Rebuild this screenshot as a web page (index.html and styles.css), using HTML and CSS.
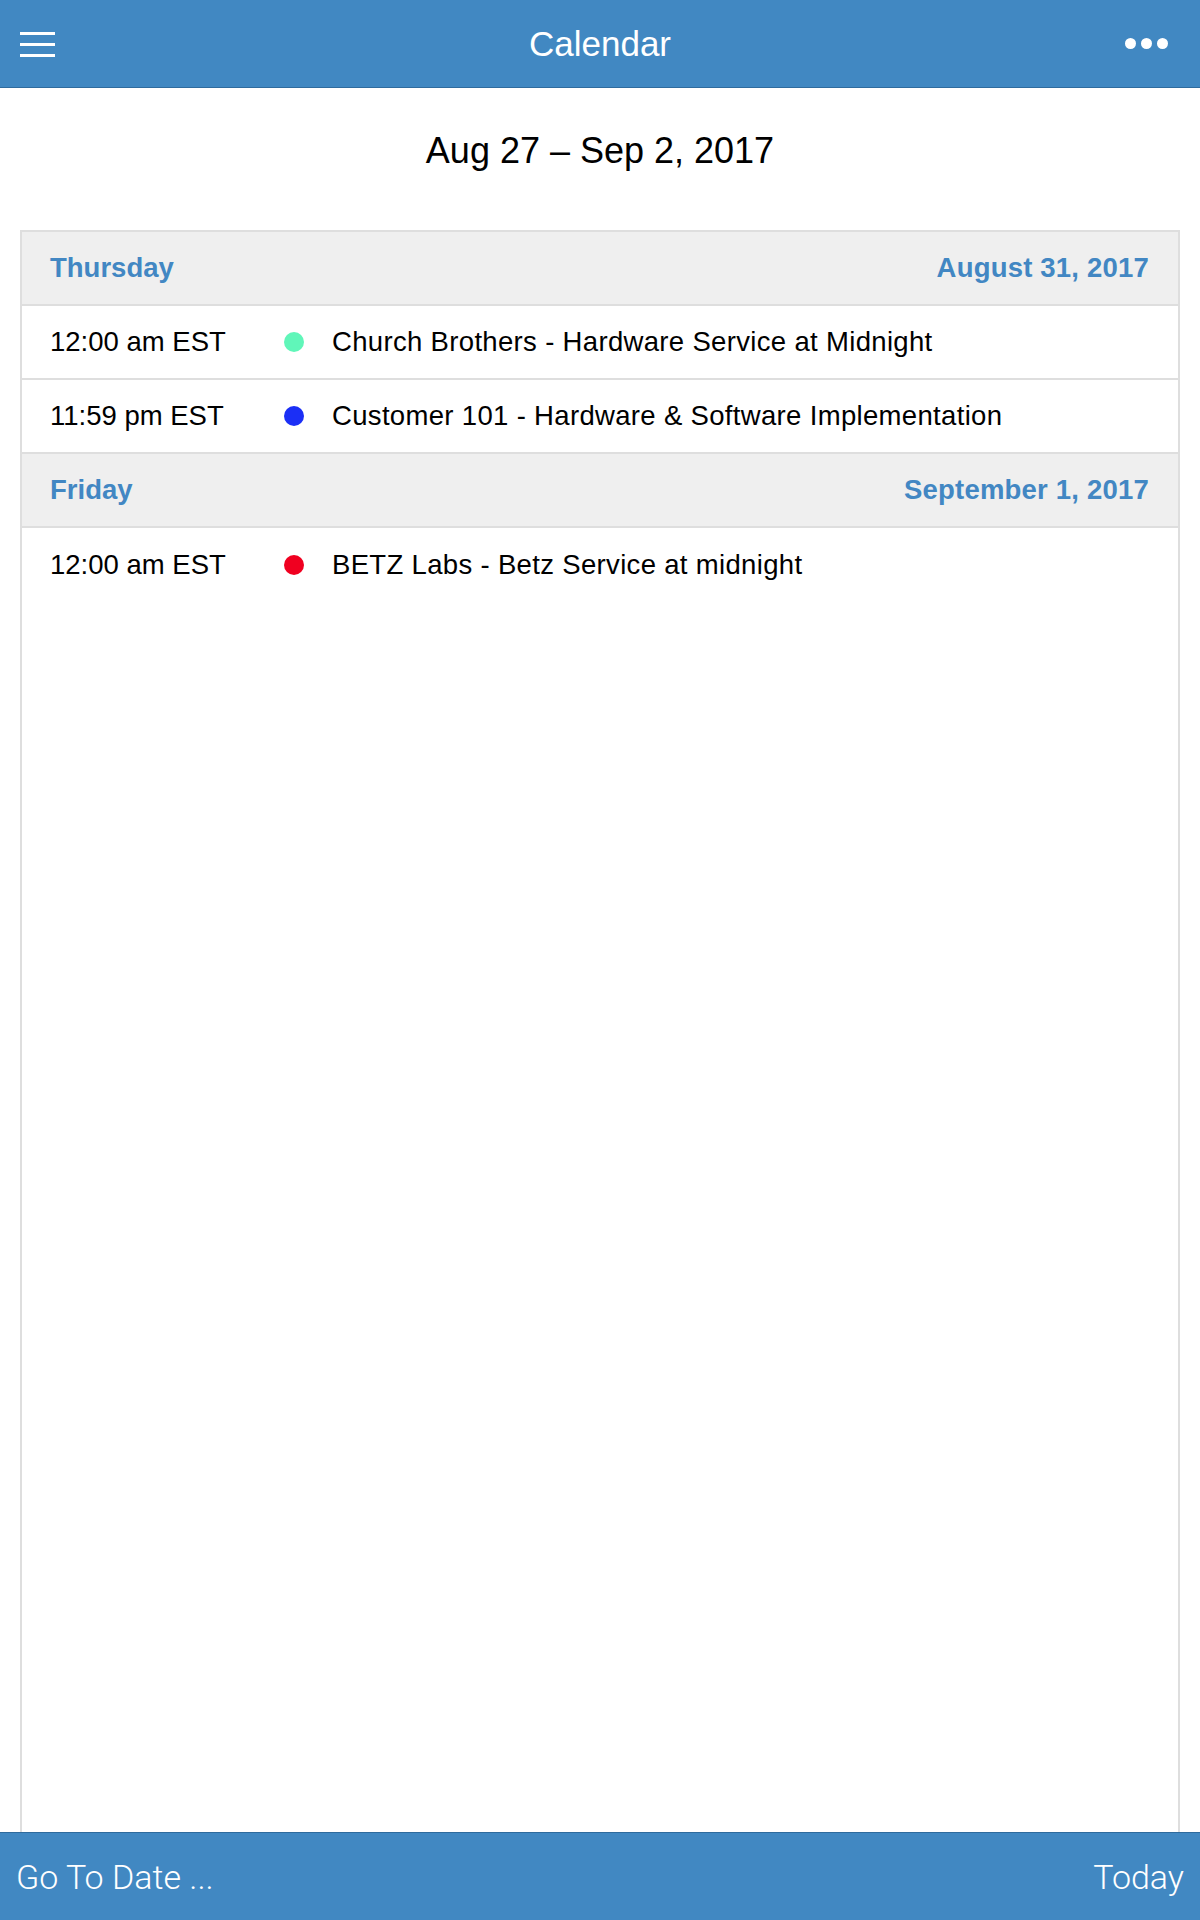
FILE: index.html
```html
<!DOCTYPE html>
<html lang="en">
<head>
    <meta charset="UTF-8">
    <meta name="viewport" content="width=device-width, initial-scale=1.0">
    <title>Calendar</title>
    <link rel="stylesheet" href="styles.css">
</head>
<body>
    <div class="app">
        <header class="topbar">
            <div class="menu">
                <svg width="35" height="25" viewBox="0 0 35 25">
                    <rect x="0" y="0" width="35" height="3" fill="#fff"/>
                    <rect x="0" y="11" width="35" height="3" fill="#fff"/>
                    <rect x="0" y="22" width="35" height="3" fill="#fff"/>
                </svg>
            </div>
            <div class="title">Calendar</div>
            <div class="more">
                <span></span><span></span><span></span>
            </div>
        </header>

        <div class="range">Aug 27 &ndash; Sep 2, 2017</div>

        <div class="agenda">
            <div class="day">
                <span>Thursday</span>
                <span class="date">August 31, 2017</span>
            </div>
            <div class="event">
                <span class="time">12:00 am EST</span>
                <span class="dot mint"></span>
                <span class="name">Church Brothers - Hardware Service at Midnight</span>
            </div>
            <div class="event">
                <span class="time">11:59 pm EST</span>
                <span class="dot blue"></span>
                <span class="name">Customer 101 - Hardware &amp; Software Implementation</span>
            </div>
            <div class="day">
                <span>Friday</span>
                <span class="date">September 1, 2017</span>
            </div>
            <div class="event last">
                <span class="time">12:00 am EST</span>
                <span class="dot red"></span>
                <span class="name">BETZ Labs - Betz Service at midnight</span>
            </div>
        </div>

        <footer class="bottombar">
            <span>Go To Date ...</span>
            <span>Today</span>
        </footer>
    </div>
</body>
</html>
```

FILE: styles.css
```css
* {
    box-sizing: border-box;
}
html, body {
    margin: 0;
    width: 100%;
    height: 100%;
}
body {
    font-family: "Liberation Sans", Arial, sans-serif;
    color: #000;
    background: #fff;
}

.app {
    display: flex;
    flex-direction: column;
    height: 1920px;
}

/* top bar */
.topbar {
    height: 88px;
    flex: none;
    background-color: #4188c2;
    border-bottom: 1px solid #2f6b9d;
    display: grid;
    grid-template-columns: 1fr auto 1fr;
    align-items: center;
    padding: 0 20px;
}
.menu svg {
    display: block;
    margin-top: 1px;
}
.title {
    color: #fff;
    font-size: 35px;
}
.more {
    justify-self: end;
    display: flex;
    gap: 5px;
    margin-right: 12px;
}
.more span {
    width: 11px;
    height: 11px;
    border-radius: 50%;
    background: #fff;
}

/* week range */
.range {
    flex: none;
    height: 142px;
    padding-top: 45px;
    text-align: center;
    font-size: 36px;
    line-height: 36px;
}

/* agenda list */
.agenda {
    flex: 1;
    margin: 0 20px;
    border: 2px solid #dedede;
    border-bottom: none;
}
.day {
    height: 74px;
    background-color: #efefef;
    border-bottom: 2px solid #dedede;
    display: flex;
    align-items: center;
    justify-content: space-between;
    padding: 0 29px 0 28px;
    color: #4287c3;
    font-weight: bold;
    font-size: 27.5px;
}
.day .date {
    letter-spacing: 0.2px;
}
.event {
    height: 74px;
    border-bottom: 2px solid #dedede;
    display: flex;
    align-items: center;
    padding-left: 28px;
    font-size: 27.5px;
}
.event.last {
    border-bottom: none;
}
.time {
    width: 234px;
    flex: none;
}
.name {
    letter-spacing: 0.33px;
}
.dot {
    width: 20px;
    height: 20px;
    border-radius: 50%;
    margin-right: 28px;
    flex: none;
}
.dot.mint { background-color: #60f6b9; }
.dot.blue { background-color: #1b2ff6; }
.dot.red { background-color: #f00020; }

/* bottom bar */
.bottombar {
    height: 88px;
    flex: none;
    background-color: #4188c2;
    border-top: 1px solid #2f6b9d;
    display: flex;
    align-items: center;
    justify-content: space-between;
    padding: 0 16px;
    color: #fff;
    font-family: Roboto, "Liberation Sans", sans-serif;
    font-weight: 300;
    font-size: 34px;
}
```
